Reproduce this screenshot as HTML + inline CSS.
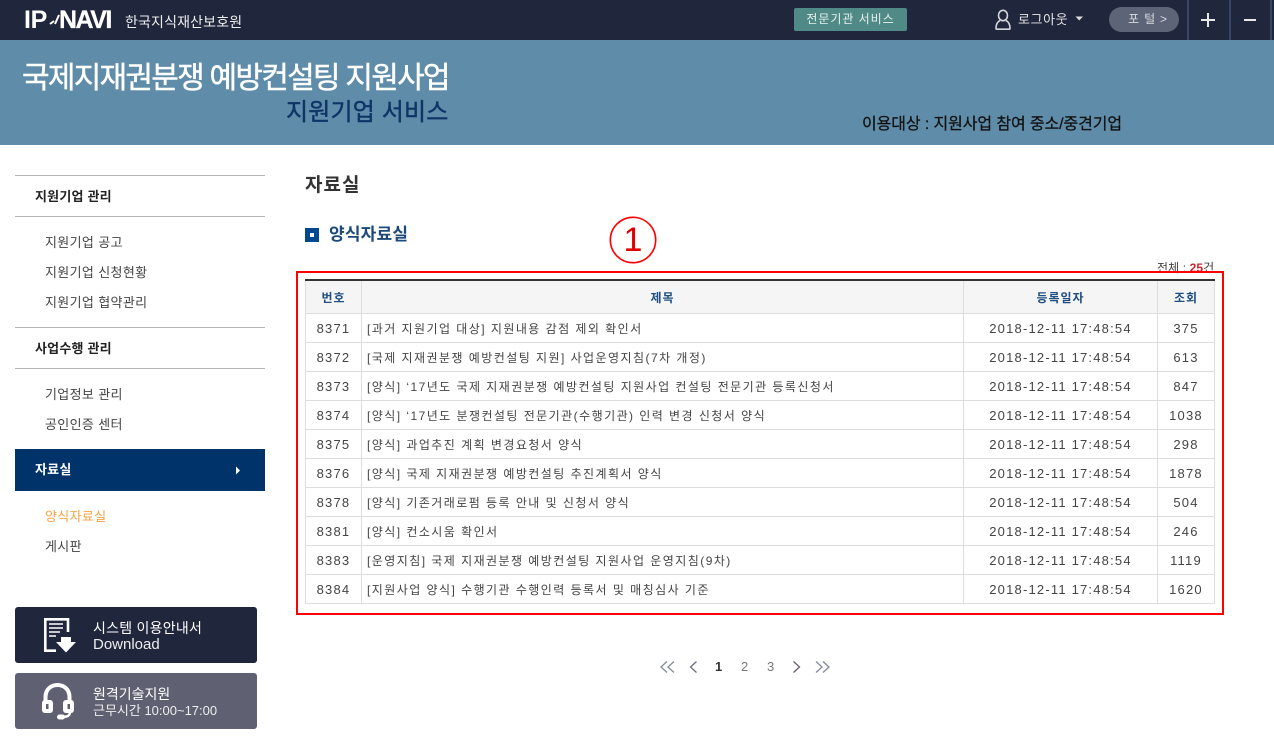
<!DOCTYPE html>
<html lang="ko">
<head>
<meta charset="utf-8">
<title>자료실</title>
<style>
html,body{margin:0;padding:0;background:#fff}
body{width:1274px;height:741px;position:relative;overflow:hidden;font-family:"Liberation Sans","Noto Sans CJK KR",sans-serif;color:#333}
.a{position:absolute;white-space:nowrap}
.line{position:absolute;left:15px;width:250px;height:1px;background:#b5b5b5}
.m{position:absolute;left:45px;font-size:13px;line-height:18px;color:#444;letter-spacing:.35px;white-space:nowrap}
.g{position:absolute;left:35px;font-size:13px;line-height:18px;font-weight:700;color:#222;letter-spacing:.2px;white-space:nowrap}
table{position:absolute;left:305px;top:279px;width:909px;border-collapse:collapse;table-layout:fixed;border-top:2px solid #333;font-size:13px;letter-spacing:1.2px;color:#444}
th{height:32px;padding:0;background:#f5f5f5;border:1px solid #ddd;border-top:0;color:#1f4e80;font-size:12px;letter-spacing:.95px;font-weight:700;text-align:center}
td{height:28px;padding:0;border:1px solid #ddd;text-align:center;white-space:nowrap;overflow:hidden}
td.l{text-align:left;padding-left:5px;font-size:12px;letter-spacing:1.45px}
</style>
</head>
<body>
<!-- top bar -->
<div class="a" style="left:0;top:0;width:1274px;height:40px;background:#20263b"></div>
<div class="a" style="left:24px;top:6px;font-size:25px;line-height:29px;font-weight:700;color:#fff;letter-spacing:-.3px">IP</div>
<svg class="a" style="left:49px;top:13px" width="11" height="14"><path d="M1 11L5 8M10 2L6 11" stroke="#fff" stroke-width="2" fill="none"/></svg>
<div class="a" style="left:59px;top:6px;font-size:25px;line-height:29px;font-weight:700;color:#fff;letter-spacing:-1.5px;-webkit-text-stroke:.3px #fff">NAVI</div>
<div class="a" style="left:125px;top:12px;font-size:14px;line-height:20px;color:#eee;letter-spacing:.15px">한국지식재산보호원</div>
<div class="a" style="left:794px;top:8px;width:113px;height:23px;background:#4f8a86;border-radius:2px;color:#e8f0ef;font-size:12px;line-height:23px;text-align:center;letter-spacing:.95px">전문기관 서비스</div>
<svg class="a" style="left:994px;top:9px" width="18" height="22" viewBox="0 0 18 22" fill="none" stroke="#d5d7dc" stroke-width="1.6"><ellipse cx="9" cy="6.500" rx="4.500" ry="5.200"/><path d="M6 11.500C3 13 2 16 2 19.500Q2 20.200 3 20.200H15Q16 20.200 16 19.500C16 16 15 13 12 11.500"/></svg>
<div class="a" style="left:1018px;top:11px;font-size:13px;line-height:18px;color:#e6e6e6;letter-spacing:.6px">로그아웃</div>
<svg class="a" style="left:1075px;top:16px" width="9" height="6"><path d="M0.500 0.500H8L4.200 4.500Z" fill="#ddd"/></svg>
<div class="a" style="left:1109px;top:7px;width:70px;height:25px;border-radius:13px;background:#5e6477;color:#d8dae0;font-size:12px;line-height:25px;text-align:center;letter-spacing:.8px;text-indent:8px">포 털 &gt;</div>
<div class="a" style="left:1187px;top:0;width:2px;height:40px;background:#3a4468"></div>
<div class="a" style="left:1229px;top:0;width:2px;height:40px;background:#3a4468"></div>
<div class="a" style="left:1270px;top:0;width:2px;height:40px;background:#3a4468"></div>
<div class="a" style="left:1201px;top:19px;width:14px;height:2px;background:#e8e8e8"></div>
<div class="a" style="left:1207px;top:13px;width:2px;height:14px;background:#e8e8e8"></div>
<div class="a" style="left:1244px;top:19px;width:12px;height:2px;background:#e8e8e8"></div>

<!-- banner -->
<div class="a" style="left:0;top:40px;width:1274px;height:105px;background:#5f8ca8"></div>
<div class="a" style="left:22px;top:59px;font-size:30px;line-height:40px;color:#fff;letter-spacing:-1.75px;-webkit-text-stroke:.4px #fff">국제지재권분쟁 예방컨설팅 지원사업</div>
<div class="a" style="left:286px;top:96px;font-size:24px;line-height:34px;color:#0f3567;letter-spacing:.15px;-webkit-text-stroke:.4px #0f3567">지원기업 서비스</div>
<div class="a" style="left:862px;top:115px;font-size:16px;line-height:20px;color:#111;letter-spacing:-.1px;-webkit-text-stroke:.25px #111">이용대상 : 지원사업 참여 중소/중견기업</div>

<!-- sidebar -->
<div class="line" style="top:175px"></div>
<div class="g" style="top:188px">지원기업 관리</div>
<div class="line" style="top:216px"></div>
<div class="m" style="top:234px">지원기업 공고</div>
<div class="m" style="top:264px">지원기업 신청현황</div>
<div class="m" style="top:294px">지원기업 협약관리</div>
<div class="line" style="top:327px"></div>
<div class="g" style="top:340px">사업수행 관리</div>
<div class="line" style="top:368px"></div>
<div class="m" style="top:386px">기업정보 관리</div>
<div class="m" style="top:416px">공인인증 센터</div>
<div class="a" style="left:15px;top:449px;width:250px;height:42px;background:#00336a"></div>
<div class="g" style="top:461px;color:#fff">자료실</div>
<svg class="a" style="left:235px;top:466px" width="6" height="9"><path d="M1 0.500L5 4.500L1 8.500Z" fill="#fff"/></svg>
<div class="m" style="top:508px;color:#f5a343">양식자료실</div>
<div class="m" style="top:538px">게시판</div>

<!-- side buttons -->
<div class="a" style="left:15px;top:607px;width:242px;height:56px;background:#20263b;border-radius:3px"></div>
<svg class="a" style="left:43px;top:618px" width="34" height="36" viewBox="0 0 34 36" fill="none"><path d="M25 14V1.300H2.300V32.700H13" stroke="#fff" stroke-width="2.600"/><path d="M6 6H20M6 10H20M6 14H17M6 18H13" stroke="#fff" stroke-width="1.600"/><path d="M18 19H28V24H33L23 34.500L13 24H18Z" fill="#fff"/></svg>
<div class="a" style="left:93px;top:619px;font-size:14px;line-height:19px;color:#fff;letter-spacing:.25px">시스템 이용안내서</div>
<div class="a" style="left:93px;top:636px;font-size:15px;line-height:18px;color:#eee">Download</div>
<div class="a" style="left:15px;top:673px;width:242px;height:56px;background:#5f6072;border-radius:3px"></div>
<svg class="a" style="left:41px;top:682px" width="34" height="40" viewBox="0 0 34 40" fill="none"><path d="M4.500 22V15C4.500 -1 28.500 -1 28.500 15V22" stroke="#fff" stroke-width="4"/><rect x="1" y="18" width="11" height="13" rx="3" fill="#fff"/><rect x="22" y="18" width="11" height="13" rx="3" fill="#fff"/><rect x="5" y="22" width="2.500" height="5" fill="#5f6072"/><rect x="26.500" y="22" width="2.500" height="5" fill="#5f6072"/><path d="M29 30C29 34 26 35 20 35" stroke="#fff" stroke-width="2.400"/><rect x="16" y="32.500" width="8" height="5" rx="2.500" fill="#fff"/></svg>
<div class="a" style="left:93px;top:685px;font-size:14px;line-height:19px;color:#fff">원격기술지원</div>
<div class="a" style="left:93px;top:702px;font-size:13px;line-height:17px;color:#eee">근무시간 10:00~17:00</div>

<!-- content -->
<div class="a" style="left:305px;top:173px;font-size:19px;line-height:26px;font-weight:700;color:#333;letter-spacing:1px">자료실</div>
<div class="a" style="left:305px;top:228px;width:14px;height:14px;background:#00488f"></div>
<div class="a" style="left:310px;top:233px;width:4px;height:4px;background:#fff"></div>
<div class="a" style="left:329px;top:223px;font-size:17px;line-height:23px;font-weight:700;color:#1d4a7a;letter-spacing:.2px">양식자료실</div>

<svg class="a" style="left:608px;top:215px" width="50" height="50" viewBox="0 0 50 50"><circle cx="25" cy="25" r="22.700" fill="none" stroke="#f00" stroke-width="1.600"/></svg>
<div class="a" style="left:608px;top:215px;width:50px;text-align:center;font-size:34px;line-height:50px;color:#e00000">1</div>

<div class="a" style="left:1157px;top:260px;font-size:12px;line-height:16px;color:#444;letter-spacing:.1px">전체 : <b style="color:#d6202a">25</b>건</div>

<table>
<colgroup><col style="width:56px"><col style="width:602px"><col style="width:194px"><col style="width:57px"></colgroup>
<tr><th>번호</th><th>제목</th><th>등록일자</th><th>조회</th></tr>
<tr><td>8371</td><td class="l">[과거 지원기업 대상] 지원내용 감점 제외 확인서</td><td>2018-12-11 17:48:54</td><td>375</td></tr>
<tr><td>8372</td><td class="l">[국제 지재권분쟁 예방컨설팅 지원] 사업운영지침(7차 개정)</td><td>2018-12-11 17:48:54</td><td>613</td></tr>
<tr><td>8373</td><td class="l">[양식] ‘17년도 국제 지재권분쟁 예방컨설팅 지원사업 컨설팅 전문기관 등록신청서</td><td>2018-12-11 17:48:54</td><td>847</td></tr>
<tr><td>8374</td><td class="l">[양식] ‘17년도 분쟁컨설팅 전문기관(수행기관) 인력 변경 신청서 양식</td><td>2018-12-11 17:48:54</td><td>1038</td></tr>
<tr><td>8375</td><td class="l">[양식] 과업추진 계획 변경요청서 양식</td><td>2018-12-11 17:48:54</td><td>298</td></tr>
<tr><td>8376</td><td class="l">[양식] 국제 지재권분쟁 예방컨설팅 추진계획서 양식</td><td>2018-12-11 17:48:54</td><td>1878</td></tr>
<tr><td>8378</td><td class="l">[양식] 기존거래로펌 등록 안내 및 신청서 양식</td><td>2018-12-11 17:48:54</td><td>504</td></tr>
<tr><td>8381</td><td class="l">[양식] 컨소시움 확인서</td><td>2018-12-11 17:48:54</td><td>246</td></tr>
<tr><td>8383</td><td class="l">[운영지침] 국제 지재권분쟁 예방컨설팅 지원사업 운영지침(9차)</td><td>2018-12-11 17:48:54</td><td>1119</td></tr>
<tr><td>8384</td><td class="l">[지원사업 양식] 수행기관 수행인력 등록서 및 매칭심사 기준</td><td>2018-12-11 17:48:54</td><td>1620</td></tr>
</table>

<div class="a" style="left:296px;top:271px;width:924px;height:340px;border:2px solid #f00"></div>

<!-- pagination -->
<svg class="a" style="left:655px;top:658px" width="180" height="18" viewBox="0 0 180 18" fill="none" stroke="#7f8c9c" stroke-width="1.300">
<path d="M12 3.500L6 9L12 14.500M19 3.500L13 9L19 14.500"/>
<path d="M41.500 3.500L35.500 9L41.500 14.500" stroke="#6b6b80"/>
<path d="M138.500 3.500L144.500 9L138.500 14.500" stroke="#6b5b70"/>
<path d="M161 3.500L167 9L161 14.500M168 3.500L174 9L168 14.500"/>
</svg>
<div class="a" style="left:715px;top:658px;font-size:13px;line-height:18px;font-weight:700;color:#333">1</div>
<div class="a" style="left:741px;top:658px;font-size:13px;line-height:18px;color:#777">2</div>
<div class="a" style="left:767px;top:658px;font-size:13px;line-height:18px;color:#777">3</div>
</body>
</html>
